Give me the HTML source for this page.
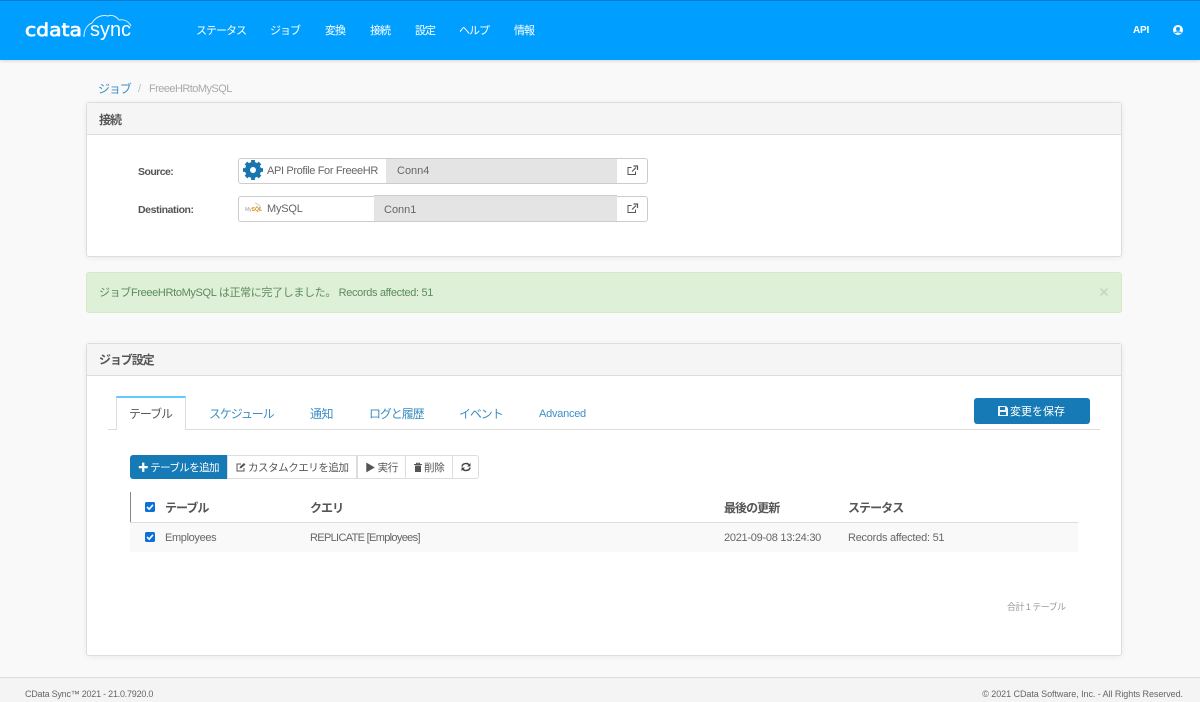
<!DOCTYPE html>
<html lang="ja"><head><meta charset="utf-8"><title>CData Sync</title>
<style>
html,body{margin:0;padding:0}
body{width:1200px;height:702px;position:relative;overflow:hidden;background:#f9f9f9;font-family:"Liberation Sans","Noto Sans CJK JP",sans-serif;color:#555;font-size:11px}
.b,.t{position:absolute;box-sizing:border-box}
.t{white-space:nowrap;line-height:14px}
.n{color:#fff;font-size:11px;letter-spacing:-1px;top:24px}
.card{background:#fff;border:1px solid #ddd;border-radius:3px;box-shadow:0 1px 6px rgba(0,0,0,.06)}
.hd{background:#f5f5f5;border-bottom:1px solid #ddd;left:87px;width:1034px}
.tab{color:#3b8fc4;font-size:12px;top:407px;letter-spacing:-1.1px}
.btn{border:1px solid #ddd;background:#fff;top:455px;height:24px}
.th{font-weight:bold;font-size:12px;color:#555;top:501px;letter-spacing:-.95px}
.td{font-size:11px;color:#666;top:531px}
.cb{width:10px;height:10px;background:#0d6fd8;border-radius:2px;left:145px}
svg{position:absolute;overflow:visible}
</style></head><body>
<div class="b" style="left:0;top:0;width:1200px;height:60px;background:#009fff;border-top:1px solid #0a78cf;box-shadow:0 1px 3px rgba(0,0,0,.15)"></div>
<svg style="left:0;top:0" width="140" height="60" viewBox="0 0 140 60">
<text x="25" y="36" font-family="DejaVu Sans" font-size="18" fill="#fff" stroke="#fff" stroke-width=".7" textLength="57" lengthAdjust="spacingAndGlyphs">cdata</text>
<text x="90" y="36" font-family="Liberation Sans" font-size="20" fill="#fff" textLength="41" lengthAdjust="spacingAndGlyphs">sync</text>
<path d="M84 37C84 30 87 25 92 23C95 18 101 14 108 16C112 14 117 17 119 20C125 19 129 22 131 26" fill="none" stroke="#d8f0ff" stroke-width="1"/>
</svg>
<span class="t n" style="left:196px">ステータス</span><span class="t n" style="left:270px">ジョブ</span><span class="t n" style="left:325px">変換</span><span class="t n" style="left:370px">接続</span><span class="t n" style="left:415px">設定</span><span class="t n" style="left:459px">ヘルプ</span><span class="t n" style="left:514px">情報</span>
<span class="t" style="left:1133px;top:24px;color:#fff;font-size:10px;font-weight:bold;letter-spacing:-.2px">API</span>
<svg style="left:1173px;top:25px" width="10" height="10" viewBox="0 0 10 10"><circle cx="5" cy="5" r="5" fill="#fff"/><circle cx="5" cy="4" r="2" fill="#009fff"/><path d="M1.8 8.2C2.4 6.4 7.6 6.4 8.2 8.2" stroke="#009fff" stroke-width="1.2" fill="none"/></svg>

<span class="t" style="left:98px;top:82px;color:#3b8fc4;font-size:12px;letter-spacing:-1.1px">ジョブ</span>
<span class="t" style="left:138px;top:82px;color:#bbb;font-size:11px">/</span>
<span class="t" style="left:149px;top:82px;color:#aaa;font-size:11px;letter-spacing:-.55px">FreeeHRtoMySQL</span>

<div class="b card" style="left:86px;top:102px;width:1036px;height:155px"></div>
<div class="b hd" style="top:103px;height:32px"></div>
<span class="t" style="left:99px;top:113px;font-size:12px;font-weight:bold;color:#555;letter-spacing:-1px">接続</span>
<span class="t" style="left:138px;top:165px;font-size:10.5px;font-weight:bold;letter-spacing:-.55px">Source:</span>
<span class="t" style="left:138px;top:203px;font-size:10.5px;font-weight:bold;letter-spacing:-.42px">Destination:</span>

<div class="b" style="left:238px;top:158px;width:410px;height:26px;border:1px solid #ccc;border-radius:3px;background:#fff"></div>
<div class="b" style="left:386px;top:158px;width:231px;height:26px;background:#e4e4e4;border-top:1px solid #ccc;border-bottom:1px solid #ccc"></div>
<svg style="left:243px;top:160px" width="20" height="20" viewBox="0 0 20 20"><circle cx="10" cy="10" r="5.5" fill="none" stroke="#1a75ae" stroke-width="5"/><path d="M10 0V4M10 16V20M0 10H4M16 10H20M3 3L6 6M14 14L17 17M17 3L14 6M6 14L3 17" stroke="#1a75ae" stroke-width="3.8"/></svg>
<span class="t" style="left:267px;top:164px;font-size:11px;color:#666;letter-spacing:-.36px">API Profile For FreeeHR</span>
<span class="t" style="left:397px;top:164px;font-size:11px;color:#666">Conn4</span>

<div class="b" style="left:238px;top:196px;width:410px;height:26px;border:1px solid #ccc;border-radius:3px;background:#fff"></div>
<div class="b" style="left:374px;top:195px;width:243px;height:27px;background:#e4e4e4;border-top:1px solid #ccc;border-bottom:1px solid #ccc"></div>
<span class="t" style="left:245px;top:206px;font-size:5px;line-height:8px;color:#999">My<b style="color:#e48e00">SQL</b></span>
<svg style="left:254px;top:202px" width="8" height="9" viewBox="0 0 8 9"><path d="M1 1C5 2 7 5 7 8M2 4C4 5 5 6 5 8" stroke="#bbb" stroke-width=".7" fill="none"/></svg>
<span class="t" style="left:267px;top:202px;font-size:11px;color:#666;letter-spacing:-.2px">MySQL</span>
<span class="t" style="left:384px;top:203px;font-size:11px;color:#666">Conn1</span>
<svg style="left:627px;top:165px" width="11" height="11" viewBox="0 0 11 11"><path d="M8.5 6.5V9.5H1V2.5H4.5" fill="none" stroke="#555" stroke-width="1"/><path d="M5 6.5L9 2.5M6.5 1H10.5V5" fill="none" stroke="#555" stroke-width="1.2"/></svg>
<svg style="left:627px;top:203px" width="11" height="11" viewBox="0 0 11 11"><path d="M8.5 6.5V9.5H1V2.5H4.5" fill="none" stroke="#555" stroke-width="1"/><path d="M5 6.5L9 2.5M6.5 1H10.5V5" fill="none" stroke="#555" stroke-width="1.2"/></svg>

<div class="b" style="left:86px;top:272px;width:1036px;height:41px;background:#dff0d8;border:1px solid #d6e9c6;border-radius:3px"></div>
<span class="t" style="left:99px;top:286px;font-size:11px;color:#5c8a5c;letter-spacing:-.35px">ジョブFreeeHRtoMySQL は正常に完了しました。 Records affected: 51</span>
<svg style="left:1100px;top:288px" width="8" height="8" viewBox="0 0 8 8"><path d="M.5.5L7.5 7.5M7.5.5L.5 7.5" stroke="#c4d8c0" stroke-width="1.6"/></svg>

<div class="b card" style="left:86px;top:343px;width:1036px;height:313px"></div>
<div class="b hd" style="top:344px;height:32px"></div>
<span class="t" style="left:99px;top:353px;font-size:12px;font-weight:bold;color:#555;letter-spacing:-1.1px">ジョブ設定</span>

<div class="b" style="left:108px;top:429px;width:992px;height:1px;background:#ddd"></div>
<div class="b" style="left:116px;top:396px;width:70px;height:34px;background:#fff;border:1px solid #ddd;border-top:2px solid #66c6ff;border-bottom:0"></div>
<span class="t tab" style="left:129px;color:#555">テーブル</span>
<span class="t tab" style="left:209px">スケジュール</span>
<span class="t tab" style="left:310px;letter-spacing:-.5px">通知</span>
<span class="t tab" style="left:369px">ログと履歴</span>
<span class="t tab" style="left:459px">イベント</span>
<span class="t tab" style="left:539px;font-size:11px;letter-spacing:-.25px">Advanced</span>

<div class="b" style="left:974px;top:398px;width:116px;height:26px;background:#157ab5;border-radius:3px"></div>
<svg style="left:998px;top:406px" width="10" height="10" viewBox="0 0 10 10"><path d="M0 0H8L10 2V10H0Z" fill="#e8f3fa"/><rect x="2" y="1" width="5" height="3" fill="#157ab5"/><rect x="2" y="6" width="6" height="3" fill="#157ab5"/></svg>
<span class="t" style="left:1010px;top:405px;color:#fff;font-size:11px">変更を保存</span>

<div class="b btn" style="left:130px;width:98px;background:#157ab5;border-color:#157ab5;border-radius:3px 0 0 3px"></div>
<span class="t" style="left:138px;top:461px;color:#fff;font-size:10.5px;letter-spacing:-.6px"><b>✚</b> テーブルを追加</span>
<div class="b btn" style="left:227px;width:130px"></div>
<svg style="left:236px;top:462px" width="10" height="10" viewBox="0 0 10 10"><path d="M8 6V9H1V2H5" fill="none" stroke="#555"/><path d="M3.5 6.5L4 4.5L8 1L9.5 2.5L5.5 6Z" fill="#555"/></svg>
<span class="t" style="left:248px;top:461px;font-size:10.5px;letter-spacing:-.45px;color:#555">カスタムクエリを追加</span>
<div class="b btn" style="left:357px;width:49px"></div>
<span class="t" style="left:365px;top:461px;font-size:10.5px;color:#555;letter-spacing:-.4px">▶ 実行</span>
<div class="b btn" style="left:405px;width:48px"></div>
<svg style="left:414px;top:463px" width="8" height="9" viewBox="0 0 8 9"><path d="M0 1.5H8M2.5 1.5V.3H5.5V1.5" stroke="#555" fill="none"/><path d="M1 2.5H7V9H1Z" fill="#555"/></svg>
<span class="t" style="left:424px;top:461px;font-size:10.5px;color:#555;letter-spacing:-.2px">削除</span>
<div class="b btn" style="left:452px;width:27px;border-radius:0 3px 3px 0"></div>
<svg style="left:461px;top:462px" width="10" height="10" viewBox="0 0 10 10"><path d="M1 4.5C1.5 1 7 .5 8.5 3.5M9 5.5C8.5 9 3 9.5 1.5 6.5" fill="none" stroke="#444" stroke-width="1.5"/><path d="M9.5 1V4.5H6ZM.5 9V5.5H4Z" fill="#444"/></svg>

<div class="b" style="left:130px;top:492px;width:1px;height:30px;background:#888"></div>
<div class="b" style="left:130px;top:522px;width:948px;height:1px;background:#ddd"></div>
<div class="b" style="left:130px;top:523px;width:948px;height:29px;background:#f9f9f9"></div>
<svg class="cb" style="top:502px" viewBox="0 0 10 10"><rect width="10" height="10" rx="2" fill="#0d6fd8"/><path d="M2 5L4.2 7.2L8 2.8" stroke="#fff" stroke-width="1.6" fill="none"/></svg>
<svg class="cb" style="top:532px" viewBox="0 0 10 10"><rect width="10" height="10" rx="2" fill="#0d6fd8"/><path d="M2 5L4.2 7.2L8 2.8" stroke="#fff" stroke-width="1.6" fill="none"/></svg>
<span class="t th" style="left:165px">テーブル</span>
<span class="t th" style="left:310px">クエリ</span>
<span class="t th" style="left:724px">最後の更新</span>
<span class="t th" style="left:848px">ステータス</span>
<span class="t td" style="left:165px;letter-spacing:-.35px">Employees</span>
<span class="t td" style="left:310px;letter-spacing:-.67px">REPLICATE [Employees]</span>
<span class="t td" style="left:724px;letter-spacing:-.27px">2021-09-08 13:24:30</span>
<span class="t td" style="left:848px;letter-spacing:-.25px">Records affected: 51</span>
<span class="t" style="left:1007px;top:600px;font-size:9px;color:#999;letter-spacing:-.55px">合計 1 テーブル</span>

<div class="b" style="left:0;top:677px;width:1200px;height:25px;background:#f4f4f4;border-top:1px solid #ddd"></div>
<span class="t" style="left:25px;top:687px;font-size:9px;color:#666;letter-spacing:-.23px">CData Sync™ 2021 - 21.0.7920.0</span>
<span class="t" style="right:17px;top:687px;font-size:9px;color:#666;letter-spacing:-.06px">© 2021 CData Software, Inc. - All Rights Reserved.</span>
</body></html>
